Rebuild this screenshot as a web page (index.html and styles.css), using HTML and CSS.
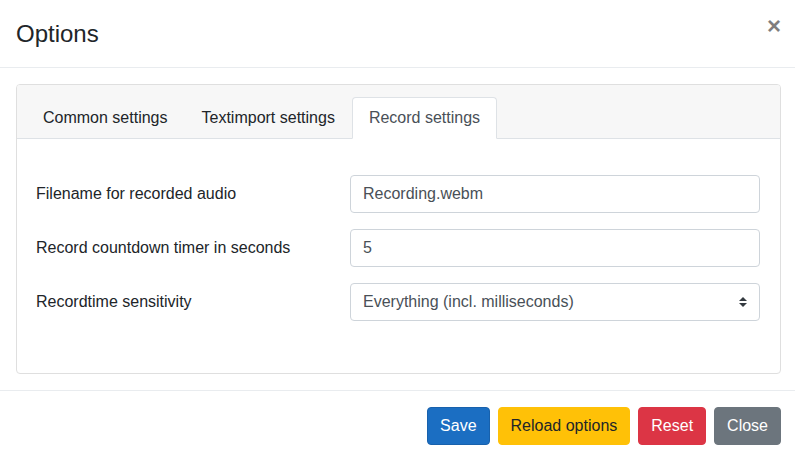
FILE: index.html
```html
<!DOCTYPE html>
<html lang="en">
<head>
<meta charset="utf-8">
<title>Options</title>
<link rel="stylesheet" href="styles.css">
</head>
<body>
<div class="modal">
  <div class="modal-header">
    <h5 class="modal-title">Options</h5>
    <button type="button" class="close" aria-label="Close">&times;</button>
  </div>
  <div class="modal-body">
    <div class="card">
      <div class="card-header">
        <ul class="tabs">
          <li class="tab">Common settings</li>
          <li class="tab">Textimport settings</li>
          <li class="tab active">Record settings</li>
        </ul>
      </div>
      <div class="card-body">
        <div class="form-row">
          <label class="form-label">Filename for recorded audio</label>
          <input class="form-control" type="text" value="Recording.webm">
        </div>
        <div class="form-row">
          <label class="form-label">Record countdown timer in seconds</label>
          <input class="form-control" type="text" value="5">
        </div>
        <div class="form-row">
          <label class="form-label">Recordtime sensitivity</label>
          <div class="form-control select">
            <span>Everything (incl. milliseconds)</span>
            <svg class="select-arrow" width="8" height="10" viewBox="0 0 4 5"><path fill="#343a40" d="M2 0L0 2h4zm0 5L0 3h4z"/></svg>
          </div>
        </div>
      </div>
    </div>
  </div>
  <div class="modal-footer">
    <button type="button" class="btn btn-primary">Save</button>
    <button type="button" class="btn btn-warning">Reload options</button>
    <button type="button" class="btn btn-danger">Reset</button>
    <button type="button" class="btn btn-secondary">Close</button>
  </div>
</div>
</body>
</html>
```

FILE: styles.css
```css
html, body {
  margin: 0;
  padding: 0;
  background: #fff;
  overflow: hidden;
}
body {
  font-family: "Liberation Sans", Arial, sans-serif;
  font-size: 16px;
  line-height: 1.5;
  color: #212529;
}
.modal {
  width: 797px;
  background: #fff;
}
.modal-header {
  display: flex;
  align-items: flex-start;
  padding: 16px 16px 16px;
  border-bottom: 1px solid #e9ecef;
}
.modal-title {
  margin: 0;
  font-size: 24px;
  font-weight: 400;
  line-height: 35px;
}
.close {
  margin: -18px -16px -16px auto;
  padding: 16px;
  background: transparent;
  border: 0;
  font-family: "Liberation Sans", Arial, sans-serif;
  font-size: 24px;
  font-weight: 700;
  line-height: 1;
  color: #000;
  opacity: .5;
  text-shadow: 0 1px 0 #fff;
}
.modal-body {
  padding: 16px;
}
.card {
  border: 1px solid #dfdfdf;
  border-radius: 4px;
  overflow: hidden;
}
.card-header {
  background: #f7f7f7;
  padding: 12px 10px 0 9px;
  border-bottom: 1px solid #dee2e6;
}
.tabs {
  display: flex;
  list-style: none;
  margin: 0 0 -1px;
  padding: 0;
}
.tab {
  padding: 8px 16px;
  border: 1px solid transparent;
  border-radius: 4px 4px 0 0;
  line-height: 24px;
  color: #212529;
}
.tab.active {
  background: #fff;
  border-color: #dee2e6 #dee2e6 #fff;
  color: #495057;
}
.card-body {
  padding: 36px 20px 52px 19px;
}
.form-row {
  display: grid;
  grid-template-columns: 314px 1fr;
  align-items: center;
  margin-bottom: 16px;
}
.form-row:last-child {
  margin-bottom: 0;
}
.form-label {
  padding: 7px 0;
  line-height: 24px;
}
.form-control {
  box-sizing: border-box;
  height: 38px;
  width: 100%;
  padding: 6px 12px;
  font-family: "Liberation Sans", Arial, sans-serif;
  font-size: 16px;
  line-height: 24px;
  color: #495057;
  background: #fff;
  border: 1px solid #ced4da;
  border-radius: 4px;
  margin: 0;
}
.select {
  display: flex;
  align-items: center;
  justify-content: space-between;
  padding-right: 12px;
}
.select-arrow {
  display: block;
}
.modal-footer {
  display: flex;
  justify-content: flex-end;
  gap: 8px;
  padding: 16px;
  border-top: 1px solid #e9ecef;
}
.btn {
  padding: 6px 12px;
  font-family: "Liberation Sans", Arial, sans-serif;
  font-size: 16px;
  line-height: 24px;
  border: 1px solid transparent;
  border-radius: 4px;
  cursor: pointer;
}
.btn-primary {
  color: #fff;
  background: #1b6ec2;
  border-color: #1861ac;
}
.btn-warning {
  color: #212529;
  background: #ffc107;
  border-color: #ffc107;
}
.btn-danger {
  color: #fff;
  background: #dc3545;
  border-color: #dc3545;
}
.btn-secondary {
  color: #fff;
  background: #6c757d;
  border-color: #6c757d;
}
```
